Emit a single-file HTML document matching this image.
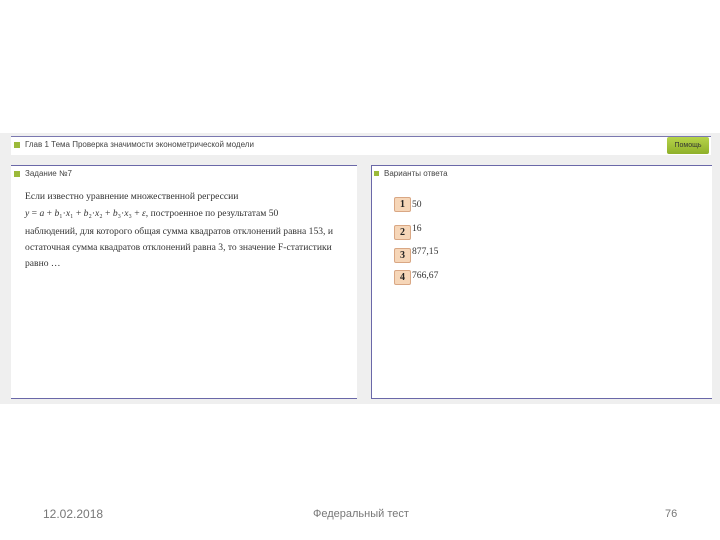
<!DOCTYPE html>
<html><head><meta charset="utf-8"><style>
body{margin:0;width:720px;height:540px;background:#fff;position:relative;overflow:hidden;font-family:"Liberation Sans",sans-serif}
.gray{position:absolute;left:0;top:133px;width:720px;height:271px;background:#efefef}
.bar{position:absolute;left:11px;top:136px;width:700px;height:18px;background:#fff;border-top:1px solid #7a78b0}
.sq{display:inline-block;width:6px;height:6px;background:#9cba3a;margin-right:5px;vertical-align:middle}
.t{font-size:8px;color:#444;position:absolute;white-space:nowrap}
.btn{position:absolute;left:667px;top:137px;width:42px;height:17px;background:linear-gradient(#b6d44a,#8fb02a);font-size:7px;color:#333;text-align:center;line-height:17px;border-radius:2px}
.panel{position:absolute;top:165px;height:232px;background:#fff;border-top:1px solid #6a68a8;border-bottom:1px solid #6a68a8}
.serif{font-family:"Liberation Serif",serif;font-size:9.6px;color:#333;position:absolute;white-space:nowrap}
.num{position:absolute;left:394px;width:15px;height:13px;background:#f6d6b8;border:1px solid #d9a784;border-radius:2px;font:bold 10px "Liberation Serif",serif;text-align:center;line-height:14px;color:#222}
.foot{position:absolute;top:508px;font-size:11px;color:#777}
</style></head><body>
<div class="gray"></div>
<div class="bar"></div>
<div class="t" style="left:14px;top:140px"><span class="sq"></span>Глав 1 Тема Проверка значимости эконометрической модели</div>
<div class="btn">Помощь</div>
<div class="panel" style="left:11px;width:346px"></div>
<div class="panel" style="left:371px;width:340px;border-left:1px solid #6a68a8"></div>
<div class="t" style="left:14px;top:169px"><span class="sq"></span>Задание №7</div>
<div class="t" style="left:374px;top:169px"><span class="sq" style="width:5px;height:5px"></span>Варианты ответа</div>
<div class="serif" style="left:25px;top:191px">Если известно уравнение множественной регрессии</div>
<div class="serif" style="left:25px;top:208px"><i>y</i> = <i>a</i> + <i>b</i>₁·<i>x</i>₁ + <i>b</i>₂·<i>x</i>₂ + <i>b</i>₃·<i>x</i>₃ + <i>ε</i>, построенное по результатам 50</div>
<div class="serif" style="left:25px;top:226px">наблюдений, для которого общая сумма квадратов отклонений равна 153, и</div>
<div class="serif" style="left:25px;top:242px">остаточная сумма квадратов отклонений равна 3, то значение F-статистики</div>
<div class="serif" style="left:25px;top:258px">равно …</div>
<div class="num" style="top:197px">1</div><div class="serif" style="left:412px;top:199px">50</div>
<div class="num" style="top:225px">2</div><div class="serif" style="left:412px;top:223px">16</div>
<div class="num" style="top:248px">3</div><div class="serif" style="left:412px;top:246px">877,15</div>
<div class="num" style="top:270px">4</div><div class="serif" style="left:412px;top:270px">766,67</div>
<div class="foot" style="left:43px;font-size:12px;top:507px">12.02.2018</div>
<div class="foot" style="left:313px">Федеральный тест</div>
<div class="foot" style="left:665px">76</div>
</body></html>
